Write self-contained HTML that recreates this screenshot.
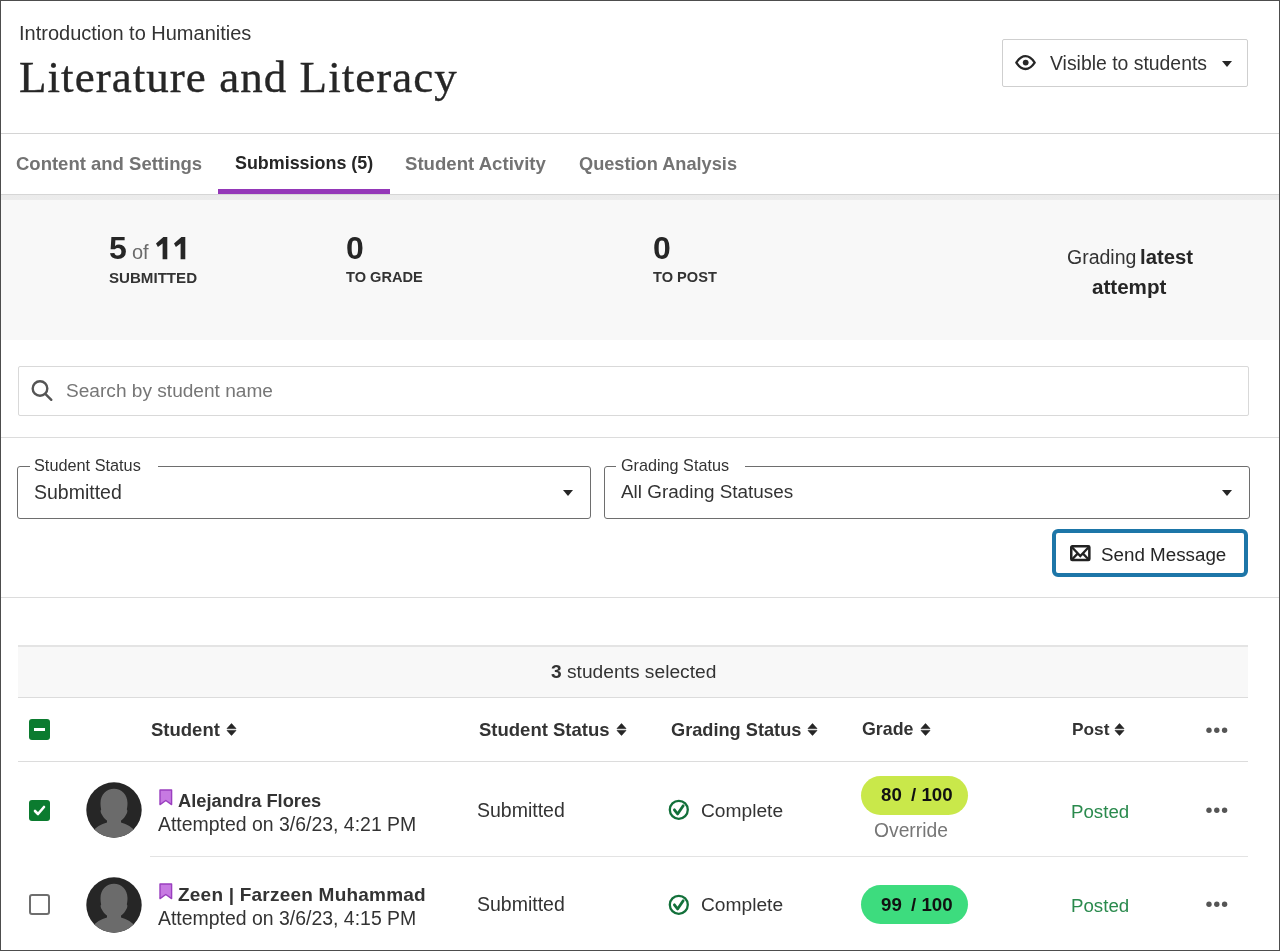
<!DOCTYPE html>
<html><head><meta charset="utf-8">
<style>
html,body{margin:0;padding:0;}
body{width:1280px;height:951px;overflow:hidden;position:relative;background:#fff;font-family:"Liberation Sans",sans-serif;color:#262626;}
.t{position:absolute;white-space:nowrap;line-height:1;will-change:transform;}
.b{font-weight:700;}
.ln{position:absolute;height:1px;background:#dcdcdc;}
.frame{position:absolute;left:0;top:0;width:1280px;height:951px;box-sizing:border-box;border:1px solid #4d4d4d;z-index:50;pointer-events:none;}
</style></head><body>

<!-- header -->
<div class="t" style="left:19px;top:23px;font-size:20px;color:#333;">Introduction to Humanities</div>
<div class="t" style="left:19px;top:55.2px;font-size:45px;font-family:'Liberation Serif',serif;color:#262626;letter-spacing:1.05px;-webkit-text-stroke:0.35px #262626;">Literature and Literacy</div>

<div style="position:absolute;left:1002px;top:39px;width:246px;height:48px;box-sizing:border-box;border:1px solid #cfcfcf;border-radius:2px;"></div>
<svg style="position:absolute;left:1015px;top:55px" width="22" height="16" viewBox="0 0 22 16"><path d="M1.3 7.6C4 3.6 7.2 1.2 10.5 1.2S17 3.6 19.7 7.6C17 11.6 13.8 14 10.5 14S4 11.6 1.3 7.6Z" fill="none" stroke="#262626" stroke-width="2.3" stroke-linejoin="round"/><circle cx="10.7" cy="7.6" r="2.9" fill="#262626"/></svg>
<div class="t" style="left:1050px;top:53.5px;font-size:19.4px;color:#333;">Visible to students</div>
<svg style="position:absolute;left:1222px;top:61px" width="10" height="6"><path d="M0 0H10L5 6Z" fill="#262626"/></svg>

<div class="ln" style="left:0;top:133px;width:1280px;background:#d4d4d4;"></div>

<!-- tabs -->
<div class="t b" style="left:16px;top:155px;font-size:18.5px;color:#737373;">Content and Settings</div>
<div class="t b" style="left:235px;top:155px;font-size:17.9px;color:#262626;">Submissions (5)</div>
<div class="t b" style="left:405px;top:155px;font-size:18.6px;color:#737373;">Student Activity</div>
<div class="t b" style="left:579px;top:155px;font-size:18.2px;color:#737373;">Question Analysis</div>
<div style="position:absolute;left:218px;top:189px;width:172px;height:5px;background:#9437b8;"></div>

<!-- stats area -->
<div style="position:absolute;left:0;top:194px;width:1280px;height:146px;background:linear-gradient(#d6d6d6 0,#d6d6d6 1.3px,#ebebeb 1.3px,#ececec 6px,#f8f8f8 6px);"></div>
<div class="t b" style="left:108.5px;top:231.7px;font-size:32px;color:#262626;">5</div>
<div class="t" style="left:131.5px;top:241.9px;font-size:20px;color:#6b6b6b;">of</div>
<svg style="position:absolute;left:155.9px;top:236.6px" width="30" height="23" viewBox="0 0 30 23"><path d="M11.3 0V22.3H6.6V6.4L1.9 9.9 0 6.6 7.4 0Z" fill="#262626"/><path d="M29.3 0V22.3H24.6V6.4L19.9 9.9 18 6.6 25.4 0Z" fill="#262626"/></svg>
<div class="t b" style="left:108.5px;top:270px;font-size:15.1px;color:#333;">SUBMITTED</div>
<div class="t b" style="left:346px;top:231.7px;font-size:32px;">0</div>
<div class="t b" style="left:346px;top:270px;font-size:14.6px;color:#333;">TO GRADE</div>
<div class="t b" style="left:653px;top:231.7px;font-size:32px;">0</div>
<div class="t b" style="left:653px;top:270px;font-size:14.6px;color:#333;">TO POST</div>
<div class="t" style="left:1066.5px;top:247.5px;font-size:19.5px;color:#333;">Grading</div>
<div class="t b" style="left:1140px;top:246.5px;font-size:20.3px;color:#262626;">latest</div>
<div class="t b" style="left:1092px;top:277px;font-size:20.6px;">attempt</div>

<!-- search -->
<div style="position:absolute;left:18px;top:366px;width:1231px;height:50px;box-sizing:border-box;border:1px solid #d9d9d9;border-radius:2px;"></div>
<svg style="position:absolute;left:30px;top:379px" width="24" height="24" viewBox="0 0 24 24"><circle cx="10" cy="9.5" r="7.3" fill="none" stroke="#555" stroke-width="2.4"/><path d="M15.3 14.8L21.3 20.8" stroke="#555" stroke-width="2.4" stroke-linecap="round"/></svg>
<div class="t" style="left:66px;top:381px;font-size:19.1px;color:#767676;">Search by student name</div>

<div class="ln" style="left:0;top:437px;width:1280px;"></div>

<!-- filters -->
<div style="position:absolute;left:17px;top:466px;width:574px;height:53px;box-sizing:border-box;border:1px solid #6e6e6e;border-radius:3px;"></div>
<div style="position:absolute;left:30px;top:460px;width:128px;height:12px;background:#fff;"></div>
<div class="t" style="left:33.5px;top:457.3px;font-size:16.3px;color:#333;">Student Status</div>
<div class="t" style="left:33.5px;top:483px;font-size:19.5px;color:#333;">Submitted</div>
<svg style="position:absolute;left:563px;top:490px" width="10" height="6"><path d="M0 0H10L5 6Z" fill="#262626"/></svg>

<div style="position:absolute;left:604px;top:466px;width:646px;height:53px;box-sizing:border-box;border:1px solid #6e6e6e;border-radius:3px;"></div>
<div style="position:absolute;left:616px;top:460px;width:129px;height:12px;background:#fff;"></div>
<div class="t" style="left:621px;top:457.3px;font-size:16.2px;color:#333;">Grading Status</div>
<div class="t" style="left:621px;top:483px;font-size:18.9px;color:#333;">All Grading Statuses</div>
<svg style="position:absolute;left:1222px;top:490px" width="10" height="6"><path d="M0 0H10L5 6Z" fill="#262626"/></svg>

<!-- send message -->
<div style="position:absolute;left:1052px;top:529px;width:196px;height:48px;box-sizing:border-box;border:4px solid #1d76a8;border-radius:6px;"></div>
<svg style="position:absolute;left:1070px;top:545px" width="21" height="17" viewBox="0 0 21 17"><rect x="1.25" y="1.35" width="18.1" height="13.6" rx="1" fill="none" stroke="#222" stroke-width="2.5"/><path d="M2 2.3L10.3 11 18.6 2.3M2.2 14.2L7.6 8.6M18.4 14.2L13 8.6" fill="none" stroke="#222" stroke-width="2.3"/></svg>
<div class="t" style="left:1100.5px;top:545.5px;font-size:18.8px;color:#262626;">Send Message</div>

<div class="ln" style="left:0;top:597px;width:1280px;"></div>

<!-- selection bar -->
<div style="position:absolute;left:18px;top:645px;width:1230px;height:53px;background:#f8f8f8;border-top:2px solid #e4e4e4;border-bottom:1.5px solid #dcdcdc;box-sizing:border-box;"></div>
<div class="t" style="left:551px;top:661.5px;font-size:19.2px;color:#333;"><b>3</b> students selected</div>

<!-- table header -->
<div style="position:absolute;left:29px;top:719px;width:21.3px;height:21px;background:#0b7b2f;border-radius:3px;"></div>
<div style="position:absolute;left:34px;top:728px;width:11px;height:3px;background:#fff;"></div>
<div class="t b" style="left:151px;top:720.5px;font-size:18.5px;color:#333;">Student</div>
<div class="t b" style="left:479px;top:720.5px;font-size:18.5px;color:#333;">Student Status</div>
<div class="t b" style="left:670.5px;top:720.5px;font-size:18.2px;color:#333;">Grading Status</div>
<div class="t b" style="left:862px;top:720.5px;font-size:17.8px;color:#333;">Grade</div>
<div class="t b" style="left:1071.5px;top:720.5px;font-size:17.3px;color:#333;">Post</div>
<svg style="position:absolute;left:226px;top:723px" width="11" height="14" viewBox="0 0 11 14"><path d="M1 5.6L5.5 0.6 10 5.6ZM1 7.4L5.5 12.4 10 7.4Z" fill="#262626" stroke="#262626" stroke-width="0.7" stroke-linejoin="round"/></svg>
<svg style="position:absolute;left:616px;top:723px" width="11" height="14" viewBox="0 0 11 14"><path d="M1 5.6L5.5 0.6 10 5.6ZM1 7.4L5.5 12.4 10 7.4Z" fill="#262626" stroke="#262626" stroke-width="0.7" stroke-linejoin="round"/></svg>
<svg style="position:absolute;left:807px;top:723px" width="11" height="14" viewBox="0 0 11 14"><path d="M1 5.6L5.5 0.6 10 5.6ZM1 7.4L5.5 12.4 10 7.4Z" fill="#262626" stroke="#262626" stroke-width="0.7" stroke-linejoin="round"/></svg>
<svg style="position:absolute;left:920px;top:723px" width="11" height="14" viewBox="0 0 11 14"><path d="M1 5.6L5.5 0.6 10 5.6ZM1 7.4L5.5 12.4 10 7.4Z" fill="#262626" stroke="#262626" stroke-width="0.7" stroke-linejoin="round"/></svg>
<svg style="position:absolute;left:1114px;top:723px" width="11" height="14" viewBox="0 0 11 14"><path d="M1 5.6L5.5 0.6 10 5.6ZM1 7.4L5.5 12.4 10 7.4Z" fill="#262626" stroke="#262626" stroke-width="0.7" stroke-linejoin="round"/></svg>
<svg style="position:absolute;left:1206px;top:726.5px" width="22" height="7"><circle cx="3" cy="3.3" r="2.7" fill="#555"/><circle cx="10.8" cy="3.3" r="2.7" fill="#555"/><circle cx="18.6" cy="3.3" r="2.7" fill="#555"/></svg>
<div class="ln" style="left:18px;top:761px;width:1230px;"></div>

<!-- row 1 -->
<div style="position:absolute;left:29px;top:799.5px;width:21.3px;height:21.3px;background:#0b7b2f;border-radius:3px;"></div>
<svg style="position:absolute;left:29px;top:799.5px" width="22" height="22"><path d="M6 11L9 14 15 7" fill="none" stroke="#fff" stroke-width="2.6" stroke-linecap="round" stroke-linejoin="round"/></svg>
<svg style="position:absolute;left:86px;top:782px" width="56" height="56" viewBox="0 0 56 56"><defs><clipPath id="c0"><circle cx="28" cy="28" r="27.7"/></clipPath></defs><circle cx="28" cy="28" r="27.7" fill="#262626"/><g clip-path="url(#c0)" fill="#6b6b6b"><path d="M28 6.8C35.5 6.8 41.5 12.5 41.5 21C41.5 24 41.2 26 40.8 27.3C41.8 28.5 41.5 31 40 32.8C38 37 34 40.5 28 40.5C22 40.5 18 37 16 32.8C14.5 31 14.2 28.5 15.2 27.3C14.8 26 14.5 24 14.5 21C14.5 12.5 20.5 6.8 28 6.8Z"/><path d="M21 36V40.5C15 42 10 45 5 51V57H51V51C46 45 41 42 35 40.5V36Z"/></g></svg>
<svg style="position:absolute;left:158.5px;top:789px" width="15" height="18" viewBox="0 0 15 18"><path d="M1 1H12.6V15.6L6.8 11.5 1 15.6Z" fill="#c77ae2" stroke="#9a3fbf" stroke-width="1.4" stroke-linejoin="round"/></svg>
<div class="t b" style="left:178px;top:792px;font-size:18.3px;color:#333;">Alejandra Flores</div>
<div class="t" style="left:158px;top:815px;font-size:19.45px;color:#333;">Attempted on 3/6/23, 4:21 PM</div>
<div class="t" style="left:477px;top:800.5px;font-size:19.5px;color:#333;">Submitted</div>
<svg style="position:absolute;left:668px;top:799px" width="22" height="22" viewBox="0 0 22 22"><circle cx="10.8" cy="10.8" r="9" fill="none" stroke="#12703a" stroke-width="2.3"/><path d="M6.4 10.8L9.6 15 15.2 6.8" fill="none" stroke="#12703a" stroke-width="2.8" stroke-linecap="round" stroke-linejoin="round"/></svg>
<div class="t" style="left:701px;top:800.5px;font-size:19.2px;color:#333;">Complete</div>
<div style="position:absolute;left:860.5px;top:775.5px;width:107.5px;height:39.5px;border-radius:20px;background:#c9e84a;"></div>
<div class="t b" style="left:880.5px;top:785.5px;font-size:18.7px;color:#111;">80</div><div class="t b" style="left:910.5px;top:785.5px;font-size:18.7px;color:#111;">/ 100</div>
<div class="t" style="left:873.5px;top:820.5px;font-size:19.3px;color:#767676;">Override</div>
<div class="t" style="left:1071px;top:802.5px;font-size:18.7px;color:#2a8a4d;">Posted</div>
<svg style="position:absolute;left:1206px;top:807px" width="22" height="7"><circle cx="3" cy="3.3" r="2.7" fill="#555"/><circle cx="10.8" cy="3.3" r="2.7" fill="#555"/><circle cx="18.6" cy="3.3" r="2.7" fill="#555"/></svg>
<div class="ln" style="left:150px;top:856px;width:1098px;background:#e3e3e3;"></div>

<!-- row 2 -->
<div style="position:absolute;left:29px;top:894px;width:21px;height:21px;box-sizing:border-box;border:2px solid #6e6e6e;border-radius:3px;background:#fff;"></div>
<svg style="position:absolute;left:86px;top:877px" width="56" height="56" viewBox="0 0 56 56"><defs><clipPath id="c95"><circle cx="28" cy="28" r="27.7"/></clipPath></defs><circle cx="28" cy="28" r="27.7" fill="#262626"/><g clip-path="url(#c95)" fill="#6b6b6b"><path d="M28 6.8C35.5 6.8 41.5 12.5 41.5 21C41.5 24 41.2 26 40.8 27.3C41.8 28.5 41.5 31 40 32.8C38 37 34 40.5 28 40.5C22 40.5 18 37 16 32.8C14.5 31 14.2 28.5 15.2 27.3C14.8 26 14.5 24 14.5 21C14.5 12.5 20.5 6.8 28 6.8Z"/><path d="M21 36V40.5C15 42 10 45 5 51V57H51V51C46 45 41 42 35 40.5V36Z"/></g></svg>
<svg style="position:absolute;left:158.5px;top:883.2px" width="15" height="18" viewBox="0 0 15 18"><path d="M1 1H12.6V15.6L6.8 11.5 1 15.6Z" fill="#c77ae2" stroke="#9a3fbf" stroke-width="1.4" stroke-linejoin="round"/></svg>
<div class="t b" style="left:178px;top:885px;font-size:19px;letter-spacing:0.22px;color:#333;">Zeen | Farzeen Muhammad</div>
<div class="t" style="left:158px;top:909px;font-size:19.45px;color:#333;">Attempted on 3/6/23, 4:15 PM</div>
<div class="t" style="left:477px;top:895px;font-size:19.5px;color:#333;">Submitted</div>
<svg style="position:absolute;left:668px;top:894px" width="22" height="22" viewBox="0 0 22 22"><circle cx="10.8" cy="10.8" r="9" fill="none" stroke="#12703a" stroke-width="2.3"/><path d="M6.4 10.8L9.6 15 15.2 6.8" fill="none" stroke="#12703a" stroke-width="2.8" stroke-linecap="round" stroke-linejoin="round"/></svg>
<div class="t" style="left:701px;top:895px;font-size:19.2px;color:#333;">Complete</div>
<div style="position:absolute;left:860.5px;top:884.8px;width:107.5px;height:39.5px;border-radius:20px;background:#3ddc7e;"></div>
<div class="t b" style="left:880.5px;top:896px;font-size:18.7px;color:#111;">99</div><div class="t b" style="left:910.5px;top:896px;font-size:18.7px;color:#111;">/ 100</div>
<div class="t" style="left:1071px;top:897px;font-size:18.7px;color:#2a8a4d;">Posted</div>
<svg style="position:absolute;left:1206px;top:901.4px" width="22" height="7"><circle cx="3" cy="3.3" r="2.7" fill="#555"/><circle cx="10.8" cy="3.3" r="2.7" fill="#555"/><circle cx="18.6" cy="3.3" r="2.7" fill="#555"/></svg>

<div class="frame"></div>
</body></html>
